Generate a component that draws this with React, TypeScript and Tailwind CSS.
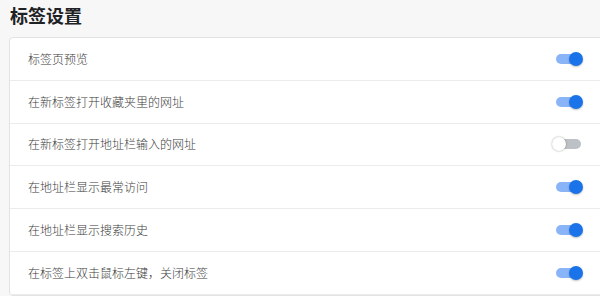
const rows = [
  { label: "标签页预览", on: true },
  { label: "在新标签打开收藏夹里的网址", on: true },
  { label: "在新标签打开地址栏输入的网址", on: false },
  { label: "在地址栏显示最常访问", on: true },
  { label: "在地址栏显示搜索历史", on: true },
  { label: "在标签上双击鼠标左键，关闭标签", on: true },
];

function Toggle({ on }: { on: boolean }) {
  return (
    <div className="relative w-[28px] h-[14px] flex items-center">
      <div className={`w-[25px] h-[10px] ml-[1px] rounded-full ${on ? "bg-[#8ab4f8]" : "bg-[#bdc1c6]"}`} />
      <div
        className={`absolute top-0 w-[14px] h-[14px] rounded-full ${
          on ? "right-0 bg-[#1a73e8] shadow-[0_1px_2px_rgba(0,0,0,0.25)]" : "left-[-3px] bg-white shadow-[0_0_2px_rgba(0,0,0,0.4)]"
        }`}
      />
    </div>
  );
}

export default function App() {
  return (
    <div className="w-[600px] h-[296px] overflow-hidden bg-[#f7f7f7] font-['Noto_Sans_CJK_SC','Noto_Sans',sans-serif]">
      <h1 className="pl-[10px] pt-[3px] h-[37px] text-[18px] font-bold leading-[24px] text-[#202124]">标签设置</h1>
      <div className="ml-[9px] w-[610px] bg-white border border-[#e3e3e3] rounded-[4px]">
        {rows.map((r) => (
          <div key={r.label} className="h-[42.75px] flex items-center justify-between pl-[18px] pr-[35px] border-b border-[#ececec]">
            <span className="text-[12px] font-light text-[#3c3c3c]">{r.label}</span>
            <Toggle on={r.on} />
          </div>
        ))}
      </div>
    </div>
  );
}
